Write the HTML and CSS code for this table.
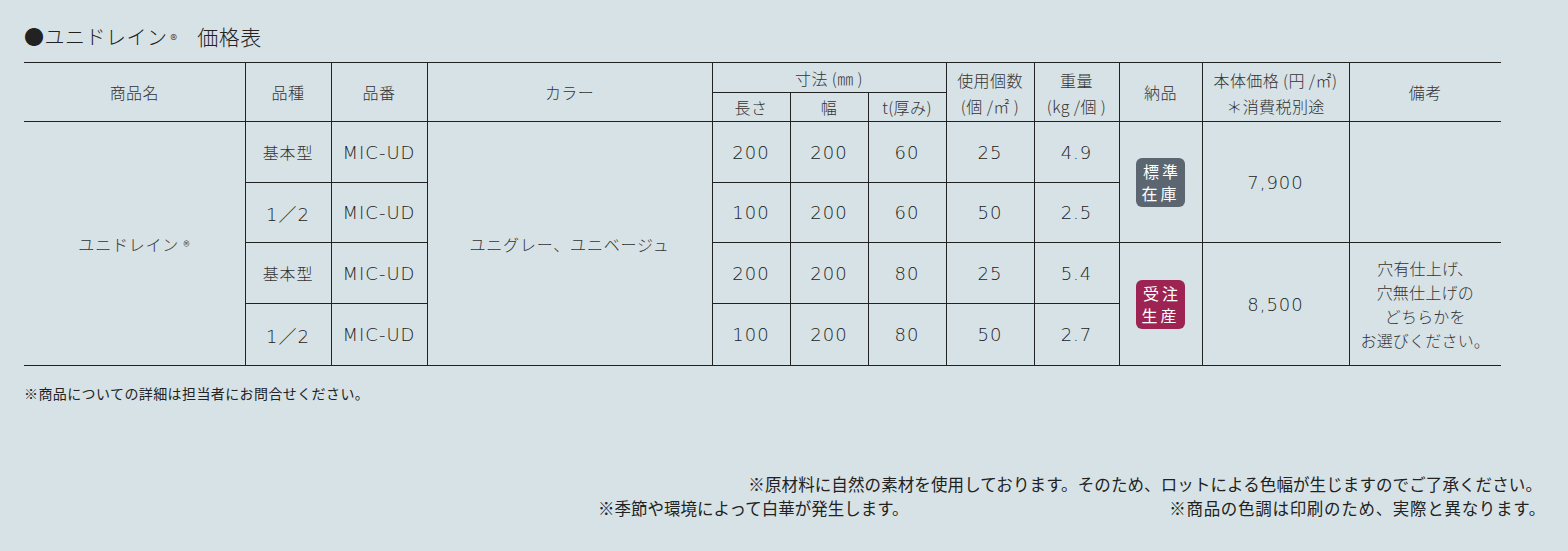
FILE: index.html
```html
<!DOCTYPE html>
<html lang="ja">
<head>
<meta charset="utf-8">
<title>ユニドレイン 価格表</title>
<link rel="stylesheet" href="styles.css">
</head>
<body>
<div class="page">
  <h1 class="title">●ユニドレイン<span class="reg">®</span><span class="title-sub">価格表</span></h1>
  <table class="price">
    <colgroup>
      <col style="width:221px"><col style="width:86px"><col style="width:96px"><col style="width:285px">
      <col style="width:78px"><col style="width:78px"><col style="width:78px"><col style="width:88px">
      <col style="width:85px"><col style="width:83px"><col style="width:147px"><col style="width:152px">
    </colgroup>
    <thead>
      <tr class="h1">
        <th rowspan="2" class="first">商品名</th>
        <th rowspan="2">品種</th>
        <th rowspan="2">品番</th>
        <th rowspan="2">カラー</th>
        <th colspan="3">寸法 (㎜ )</th>
        <th rowspan="2" class="two">使用個数<br>(個 /㎡ )</th>
        <th rowspan="2" class="two">重量<br>(kg /個 )</th>
        <th rowspan="2">納品</th>
        <th rowspan="2" class="two">本体価格 (円 /㎡)<br>＊消費税別途</th>
        <th rowspan="2" class="last">備考</th>
      </tr>
      <tr class="h2">
        <th>長さ</th><th>幅</th><th>t(厚み)</th>
      </tr>
    </thead>
    <tbody>
      <tr class="r1">
        <td rowspan="4" class="first name">ユニドレイン <span class="reg">®</span></td>
        <td class="jp">基本型</td>
        <td class="num">MIC-UD</td>
        <td rowspan="4" class="jp">ユニグレー、ユニベージュ</td>
        <td class="num">200</td><td class="num">200</td><td class="num">60</td>
        <td class="num">25</td><td class="num">4.9</td>
        <td rowspan="2"><span class="badge stock">標準<br>在庫</span></td>
        <td rowspan="2" class="num">7,900</td>
        <td rowspan="2" class="last"></td>
      </tr>
      <tr class="r2">
        <td class="num">1／2</td>
        <td class="num">MIC-UD</td>
        <td class="num">100</td><td class="num">200</td><td class="num">60</td>
        <td class="num">50</td><td class="num">2.5</td>
      </tr>
      <tr class="r3">
        <td class="jp">基本型</td>
        <td class="num">MIC-UD</td>
        <td class="num">200</td><td class="num">200</td><td class="num">80</td>
        <td class="num">25</td><td class="num">5.4</td>
        <td rowspan="2"><span class="badge order">受注<br>生産</span></td>
        <td rowspan="2" class="num">8,500</td>
        <td rowspan="2" class="last note">穴有仕上げ、<br>穴無仕上げの<br>どちらかを<br>お選びください。</td>
      </tr>
      <tr class="r4">
        <td class="num">1／2</td>
        <td class="num">MIC-UD</td>
        <td class="num">100</td><td class="num">200</td><td class="num">80</td>
        <td class="num">50</td><td class="num">2.7</td>
      </tr>
    </tbody>
  </table>
  <p class="foot">※商品についての詳細は担当者にお問合せください。</p>
</div>
<div class="notes">
  <div class="line1">※原材料に自然の素材を使用しております。そのため、ロットによる色幅が生じますのでご了承ください。</div>
  <div class="line2">
    <span>※季節や環境によって白華が発生します。</span>
    <span class="right">※商品の色調は印刷のため、実際と異なります。</span>
  </div>
</div>
</body>
</html>
```
FILE: styles.css
```css
html, body {
  margin: 0;
  padding: 0;
  background: #d7e2e6;
}
body {
  width: 1568px;
  height: 551px;
  overflow: hidden;
  color: #333;
  font-family: "Noto Sans CJK JP", "Noto Sans", sans-serif;
}
.page {
  padding: 22px 0 0 24px;
}
.title {
  margin: 0 0 12px 0;
  height: 28px;
  font-size: 20px;
  line-height: 28px;
  font-weight: 300;
  color: #222;
  letter-spacing: 0.5px;
  white-space: nowrap;
}
.title .reg {
  font-size: 14px;
  margin-left: 3px;
}
.title-sub {
  margin-left: 20px;
  font-size: 21px;
}
.price {
  border-collapse: collapse;
  table-layout: fixed;
  width: 1477px;
}
.price th, .price td {
  border: 1px solid #222;
  padding: 0;
  text-align: center;
  vertical-align: middle;
  font-weight: 300;
  color: #333;
}
.price th {
  font-size: 16px;
  line-height: 22px;
  letter-spacing: 0.4px;
}
.price .first { border-left: none; }
.price .last { border-right: none; }
.h1 { height: 30px; }
.h2 { height: 29px; }
.h1 th.two { line-height: 26px; padding-top: 1px; }
.r1 { height: 61px; }
.r2 { height: 60px; }
.r3 { height: 61px; }
.r4 { height: 62px; }
.price td.jp, .price td.name {
  font-size: 16px;
  letter-spacing: 0.8px;
}
.price td.name .reg {
  font-size: 13px;
}
.price td.num {
  font-family: "DejaVu Sans", "Noto Sans CJK JP", sans-serif;
  font-weight: 200;
  font-size: 18px;
  letter-spacing: 1px;
  color: #222;
}
.price td.note {
  font-size: 16px;
  line-height: 24px;
  letter-spacing: 0.2px;
}
.badge {
  display: inline-flex;
  align-items: center;
  justify-content: center;
  width: 49px;
  height: 49px;
  border-radius: 6px;
  color: #fff;
  font-size: 16px;
  font-weight: 400;
  line-height: 22px;
  letter-spacing: 3px;
  text-indent: 3px;
  box-sizing: border-box;
}
.badge.stock { background: #5b6671; }
.badge.order { background: #9d2452; }
.foot {
  margin: 17px 0 0 0;
  font-size: 14px;
  line-height: 20px;
  letter-spacing: 0.4px;
  color: #222;
}
.notes {
  margin: 69px 0 0 598px;
  width: 950px;
  font-size: 16.5px;
  line-height: 24px;
  color: #222;
}
.line1 {
  text-align: right;
  padding-right: 6px;
  letter-spacing: 0.1px;
}
.line2 {
  display: flex;
  justify-content: space-between;
}
.line2 .right {
  letter-spacing: 0.7px;
  margin-right: 2px;
}
```
